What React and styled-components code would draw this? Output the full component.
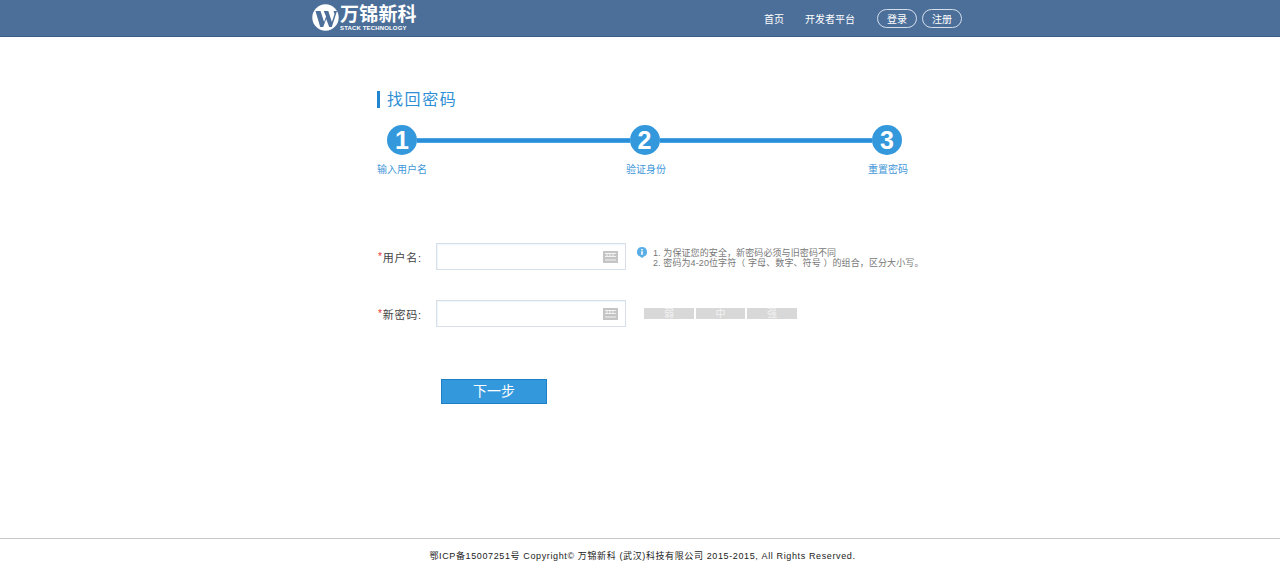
import React from "react";
import styled, { createGlobalStyle } from "styled-components";

const Global = createGlobalStyle`
  html, body { margin: 0; padding: 0; background: #fff; }
  body { font-family: "Liberation Sans", "Noto Sans CJK SC", sans-serif; }
  * { box-sizing: border-box; }
`;
const Page = styled.div`
  height: 575px; display: flex; flex-direction: column; overflow: hidden;
`;
const Header = styled.header`
  height: 37px; flex: none; background: #4c6f9a; border-bottom: 1px solid #3b5d88;
  display: flex; align-items: center; padding: 0 318px 0 312px;
`;
const Logo = styled.div`display: flex; align-items: center; gap: 1px; color: #fff; margin-top: -1px;`;
const LogoWords = styled.div`display: flex; flex-direction: column; width: 78px;`;
const LogoName = styled.div`font-size: 19px; line-height: 20px; font-weight: 700; white-space: nowrap; letter-spacing: 0.2px;`;
const LogoSub = styled.div`font-size: 6px; line-height: 6px; font-weight: 700; white-space: nowrap; letter-spacing: 0.15px;`;
const Nav = styled.nav`margin-left: auto; display: flex; align-items: center; color: #fff; font-size: 10px;`;
const NavLink = styled.a`margin-right: ${p => p.$gap}px; white-space: nowrap;`;
const Pill = styled.a`
  width: 40px; height: 19px; border: 1px solid #d5dfeb; border-radius: 10px;
  display: flex; align-items: center; justify-content: center; margin-left: ${p => p.$gap}px;
`;
const Main = styled.main`flex: 1; padding: 54px 0 0 377px;`;
const Title = styled.h1`
  margin: 0; height: 17px; border-left: 3px solid #2384cf; padding-left: 7px;
  font-size: 16px; line-height: 17px; font-weight: 400; color: #2f8fd6; letter-spacing: 1.6px;
`;
const Track = styled.div`
  width: 515px; margin: 17px 0 0 10px; display: flex; align-items: center;
`;
const Circle = styled.div`
  width: 30px; height: 30px; flex: none; border-radius: 50%; background: #3498dc; color: #fff;
  font-size: 25px; font-weight: 700; display: flex; align-items: center; justify-content: center;
`;
const Connector = styled.div`
  flex: 1; height: 5px; background: #2b8ed8; border-top: 1px solid #49a5e6; border-bottom: 1px solid #49a5e6;
`;
const Labels = styled.div`
  width: 531px; margin-top: 8px; display: flex; justify-content: space-between;
  font-size: 10px; line-height: 14px; color: #3f97d8;
`;
const StepLabel = styled.span`margin-left: ${p => p.$offset || 0}px;`;
const Row = styled.div`
  display: flex; align-items: flex-start; margin-top: ${p => p.$top}px;
`;
const FieldLabel = styled.label`
  width: 59px; height: 27px; display: flex; align-items: center; padding-left: 1px; flex: none;
  font-size: 11px; color: #444; letter-spacing: 0.8px; white-space: nowrap;
`;
const Star = styled.span`color: #e8322e; font-size: 10px;`;
const Field = styled.div`
  width: 190px; height: 27px; flex: none; border: 1px solid #d5e0ea; display: flex; align-items: center;
  justify-content: flex-end; padding-right: 7px; background: #fff; box-shadow: inset 1px 1px 1px #f2f5f8;
`;
const Hint = styled.div`
  display: flex; margin: 4px 0 0 11px; gap: 6px; font-size: 9px; line-height: 10px; color: #777; letter-spacing: 0.1px;
`;
const HintText = styled.div`padding-top: 1px; white-space: nowrap;`;
const Strength = styled.div`display: flex; gap: 2px; margin: 8px 0 0 18px;`;
const Level = styled.div`
  width: ${p => p.$w}px; height: 11px; background: #d8d8d8; color: #f3f3f3; font-size: 10px; line-height: 11px; text-align: center;
`;
const Next = styled.button`
  display: block; width: 106px; height: 25px; margin: 52px 0 0 64px; padding: 0; background: #3498dc; border: 1px solid #1f7fc4;
  color: #fff; font: 400 14px/23px "Liberation Sans", "Noto Sans CJK SC", sans-serif;
`;
const Footer = styled.footer`
  height: 37px; flex: none; border-top: 1px solid #c8c8c8; display: flex; justify-content: center; padding: 11px 0 0 5px;
  font-size: 9px; line-height: 12px; color: #222; letter-spacing: 0.62px; white-space: nowrap;
`;

const Keyboard = () => (
  <svg width="15" height="12" viewBox="0 0 15 12">
    <rect width="15" height="12" fill="#c4c4c4" />
    <path d="M2 2.5h11M2 5.5h11M2 9h11M4 2v4M7 2v4M10 2v4" stroke="#f2f2f2" strokeWidth="1" fill="none" />
  </svg>
);
const LogoMark = () => (
  <svg width="27" height="27" viewBox="0 0 27 27">
    <circle cx="13.5" cy="13.5" r="13.2" fill="#fff" />
    <path d="M3.5 7l5 0 3.6 11 2-5.5-2.4-5.5 4.6 0 3.6 11 2.6-8 -1-3h3.5l-5.2 16h-2.6l-3-8-3 8h-3z" fill="#4c6f9a" />
  </svg>
);
const InfoIcon = () => (
  <svg width="10" height="11" viewBox="0 0 10 11">
    <path d="M5 0a5 5 0 0 1 2 9.6L5 11 3 9.6A5 5 0 0 1 5 0z" fill="#5aaee6" />
    <rect x="4.2" y="2" width="1.6" height="1.4" fill="#fff" />
    <rect x="4.2" y="4.2" width="1.6" height="3.6" fill="#fff" />
  </svg>
);

export default function App() {
  return (
    <Page>
      <Global />
      <Header>
        <Logo>
          <LogoMark />
          <LogoWords>
            <LogoName>万锦新科</LogoName>
            <LogoSub>STACK TECHNOLOGY</LogoSub>
          </LogoWords>
        </Logo>
        <Nav>
          <NavLink $gap={21}>首页</NavLink>
          <NavLink $gap={22}>开发者平台</NavLink>
          <Pill>登录</Pill>
          <Pill $gap={5}>注册</Pill>
        </Nav>
      </Header>
      <Main>
        <Title>找回密码</Title>
        <Track>
          <Circle>1</Circle>
          <Connector />
          <Circle>2</Circle>
          <Connector />
          <Circle>3</Circle>
        </Track>
        <Labels>
          <StepLabel>输入用户名</StepLabel>
          <StepLabel $offset={-3}>验证身份</StepLabel>
          <StepLabel>重置密码</StepLabel>
        </Labels>
        <Row $top={66}>
          <FieldLabel><Star>*</Star>用户名:</FieldLabel>
          <Field><Keyboard /></Field>
          <Hint>
            <InfoIcon />
            <HintText>
              1. 为保证您的安全，新密码必须与旧密码不同<br />
              2. 密码为4-20位字符（ 字母、数字、符号 ）的组合，区分大小写。
            </HintText>
          </Hint>
        </Row>
        <Row $top={30}>
          <FieldLabel><Star>*</Star>新密码:</FieldLabel>
          <Field><Keyboard /></Field>
          <Strength>
            <Level $w={50}>弱</Level>
            <Level $w={49}>中</Level>
            <Level $w={50}>强</Level>
          </Strength>
        </Row>
        <Next>下一步</Next>
      </Main>
      <Footer>鄂ICP备15007251号 Copyright© 万锦新科 (武汉)科技有限公司 2015-2015, All Rights Reserved.</Footer>
    </Page>
  );
}
